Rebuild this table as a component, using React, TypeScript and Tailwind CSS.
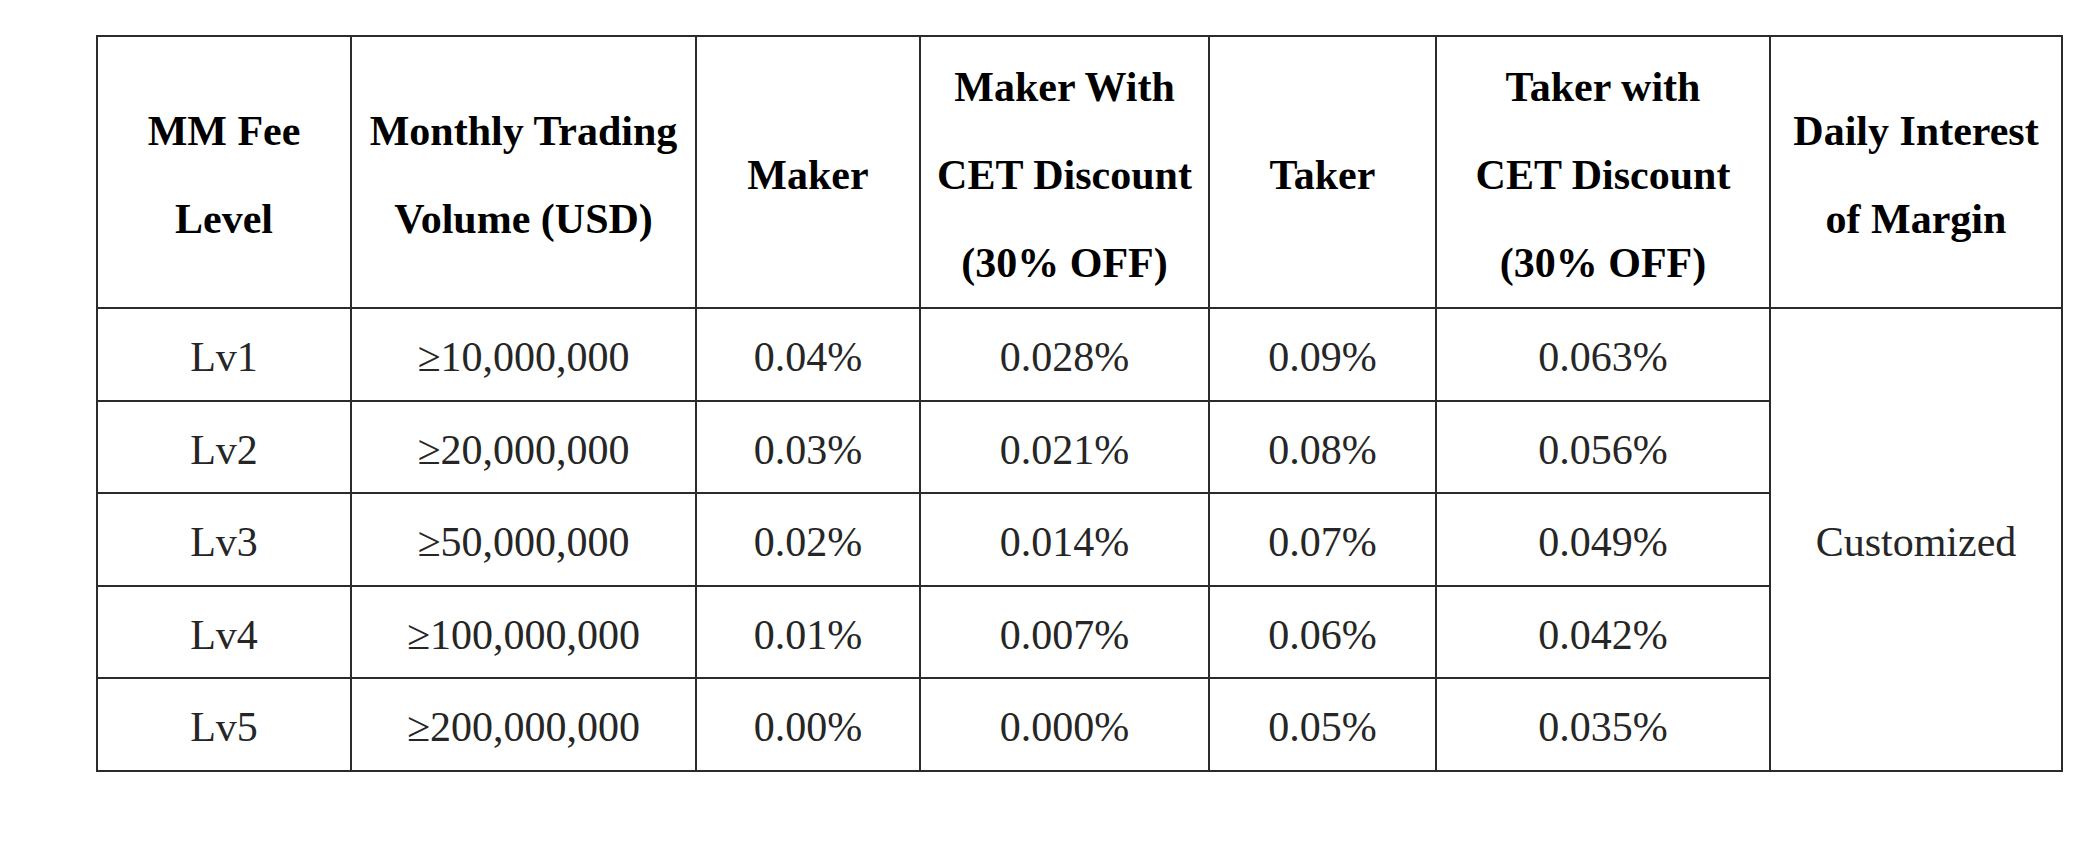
const headers = [
  ['MM Fee', 'Level'],
  ['Monthly Trading', 'Volume (USD)'],
  ['Maker'],
  ['Maker With', 'CET Discount', '(30% OFF)'],
  ['Taker'],
  ['Taker with', 'CET Discount', '(30% OFF)'],
  ['Daily Interest', 'of Margin'],
];

const rows = [
  ['Lv1', '≥10,000,000', '0.04%', '0.028%', '0.09%', '0.063%'],
  ['Lv2', '≥20,000,000', '0.03%', '0.021%', '0.08%', '0.056%'],
  ['Lv3', '≥50,000,000', '0.02%', '0.014%', '0.07%', '0.049%'],
  ['Lv4', '≥100,000,000', '0.01%', '0.007%', '0.06%', '0.042%'],
  ['Lv5', '≥200,000,000', '0.00%', '0.000%', '0.05%', '0.035%'],
];

const colWidths = ['w-[254px]', 'w-[345px]', 'w-[224px]', 'w-[289px]', 'w-[227px]', 'w-[334px]', 'w-[292px]'];

export default function App() {
  return (
    <div className="min-h-[843px] w-[2100px] bg-white pl-[96px] pt-[35px] font-['Liberation_Serif',serif]">
      <table className="table-fixed border-collapse text-center">
        <colgroup>
          {colWidths.map((w, i) => (
            <col key={i} className={w} />
          ))}
        </colgroup>
        <thead>
          <tr className="h-[272px]">
            {headers.map((lines, i) => (
              <th
                key={i}
                className="border-2 border-[#2b2b2b] p-0 pt-[6px] align-middle text-[42px] font-bold leading-[88px] text-black"
              >
                {lines.map((l) => (
                  <div key={l} className="whitespace-nowrap">
                    {l}
                  </div>
                ))}
              </th>
            ))}
          </tr>
        </thead>
        <tbody>
          {rows.map((r, ri) => (
            <tr key={r[0]} className="h-[92.5px]">
              {r.map((c, ci) => (
                <td
                  key={ci}
                  className="border-2 border-[#2b2b2b] p-0 pt-[6px] align-middle text-[42px] leading-none whitespace-nowrap text-[#262626]"
                >
                  {c}
                </td>
              ))}
              {ri === 0 && (
                <td
                  rowSpan={5}
                  className="border-2 border-[#2b2b2b] p-0 pt-[6px] align-middle text-[42px] leading-none text-[#262626]"
                >
                  Customized
                </td>
              )}
            </tr>
          ))}
        </tbody>
      </table>
    </div>
  );
}
